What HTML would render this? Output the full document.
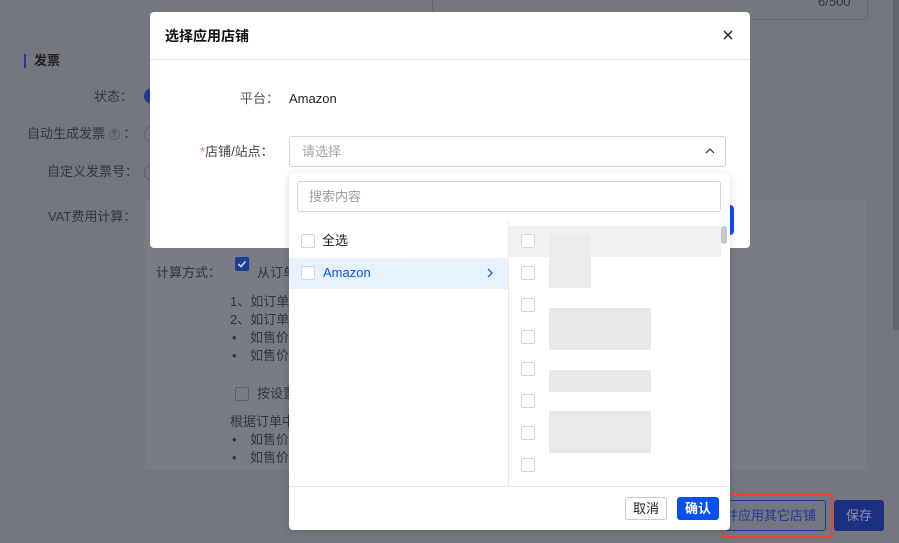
<!DOCTYPE html>
<html><head><meta charset="utf-8"><style>
*{box-sizing:border-box;margin:0;padding:0}
body{width:899px;height:543px;overflow:hidden;background:#74777f;font-family:"Liberation Sans","Noto Sans CJK SC",sans-serif;font-size:13px;position:relative;color:#222}
.a{position:absolute;white-space:nowrap;line-height:16px}
.g{color:#34363b}
.cb{position:absolute;width:14px;height:14px;border:1px solid #d3d5da;border-radius:2px;background:#fff}
.cbd{position:absolute;width:14px;height:14px;border:1px solid #5d6068;border-radius:2px}
.blk{position:absolute;background:#e6e7e9}
.bl{line-height:18px}
.bl i{font-style:normal;display:inline-block;width:20px;padding-left:2px}
</style></head><body>
<div class="a" style="left:432px;top:-10px;width:436px;height:30px;border:1px solid #65686f;border-radius:3px"></div>
<div class="a g" style="left:818px;top:-6px">6/500</div>
<div class="a" style="left:893px;top:0;width:6px;height:330px;background:#61646b"></div>
<div class="a" style="left:24px;top:54px;width:2px;height:14px;background:#1d3c9a"></div>
<div class="a" style="left:34px;top:53px;font-weight:bold;color:#222">发票</div>
<div class="a g" style="left:94px;top:89px">状态：</div>
<div class="a" style="left:144px;top:88px;width:10px;height:16px;background:#1d3c9a;border-radius:8px 0 0 8px"></div>
<div class="a" style="left:144px;top:126px;width:10px;height:17px;border:1.5px solid #5d6068;border-right:none;border-radius:9px 0 0 9px"></div>
<div class="a" style="left:144px;top:164px;width:10px;height:17px;border:1.5px solid #5d6068;border-right:none;border-radius:9px 0 0 9px"></div>
<div class="a g" style="left:27px;top:126px">自动生成发票 <span style="display:inline-block;width:11px;height:11px;border:1px solid #5d6068;border-radius:50%;font-size:8px;line-height:9px;text-align:center;vertical-align:1px">?</span> ：</div>
<div class="a g" style="left:47px;top:164px">自定义发票号：</div>
<div class="a g" style="left:48px;top:209px">VAT费用计算：</div>
<div class="a" style="left:145px;top:200px;width:722px;height:270px;background:#797c84"></div>
<div class="a g" style="left:156px;top:265px">计算方式：</div>
<div class="a" style="left:235px;top:257px;width:14px;height:14px;background:#1d3c9a;border-radius:2px"></div>
<svg class="a" style="left:235px;top:257px" width="14" height="14"><path d="M3.5 7 L6 9.5 L10.5 4.5" stroke="#c8cbd6" stroke-width="1.8" fill="none"/></svg>
<div class="a g" style="left:257px;top:265px">从订单</div>
<div class="a g bl" style="left:230px;top:293px">1、如订单<br>2、如订单<br><i>•</i>如售价<br><i>•</i>如售价</div>
<div class="cbd" style="left:235px;top:387px"></div>
<div class="a g" style="left:257px;top:386px">按设置</div>
<div class="a g bl" style="left:230px;top:413px">根据订单中<br><i>•</i>如售价<br><i>•</i>如售价</div>
<div class="a" style="left:724px;top:500px;width:102px;height:31px;border:1px solid #1d3c9a;border-radius:3px;color:#1d3c9a;line-height:29px;text-align:right;padding-right:12px">并应用其它店铺</div>
<div class="a" style="left:722px;top:493px;width:111px;height:45px;border:2px solid #e9423e;border-radius:4px"></div>
<div class="a" style="left:834px;top:500px;width:50px;height:31px;background:#1d3080;border-radius:3px;color:#8a94b8;line-height:31px;text-align:center">保存</div>

<div class="a" style="left:150px;top:12px;width:600px;height:236px;background:#fff;border-radius:4px"></div>
<div class="a" style="left:165px;top:28px;font-size:14px;font-weight:bold;color:#111">选择应用店铺</div>
<svg class="a" style="left:723px;top:30px" width="10" height="10"><path d="M1 1 L9 9 M9 1 L1 9" stroke="#222" stroke-width="1.5"/></svg>
<div class="a" style="left:150px;top:59px;width:600px;height:1px;background:#e4e5e8"></div>
<div class="a" style="left:240px;top:91px;color:#555">平台：</div>
<div class="a" style="left:289px;top:91px;color:#222">Amazon</div>
<div class="a" style="left:200px;top:144px;color:#444"><span style="color:#f56c6c">*</span>店铺/站点：</div>
<div class="a" style="left:289px;top:136px;width:437px;height:31px;border:1px solid #d3d5da;border-radius:3px"></div>
<div class="a" style="left:302px;top:144px;color:#a0a3a8">请选择</div>
<svg class="a" style="left:704px;top:146px" width="12" height="10"><path d="M2 7 L6 3 L10 7" stroke="#444" stroke-width="1.3" fill="none"/></svg>
<div class="a" style="left:726px;top:205px;width:8px;height:30px;background:#0a4ff0;border-radius:0 4px 4px 0"></div>

<div class="a" style="left:289px;top:173px;width:441px;height:357px;background:#fff;border-radius:4px;box-shadow:0 2px 8px rgba(0,0,0,.15)"></div>
<div class="a" style="left:297px;top:181px;width:424px;height:31px;border:1px solid #d3d5da;border-radius:3px"></div>
<div class="a" style="left:309px;top:189px;color:#9a9da2">搜索内容</div>
<div class="a" style="left:508px;top:221px;width:1px;height:265px;background:#e8e9eb"></div>
<div class="cb" style="left:301px;top:234px"></div>
<div class="a" style="left:322px;top:233px;color:#222">全选</div>
<div class="a" style="left:289px;top:258px;width:219px;height:31px;background:#e8f1fe"></div>
<div class="cb" style="left:301px;top:266px"></div>
<div class="a" style="left:323px;top:265px;color:#0a4ff0">Amazon</div>
<svg class="a" style="left:486px;top:267px" width="8" height="12"><path d="M2 2 L6 6 L2 10" stroke="#2458e8" stroke-width="1.3" fill="none"/></svg>
<div class="a" style="left:509px;top:226px;width:212px;height:31px;background:#f0f1f3"></div>
<div class="cb" style="left:521px;top:234px"></div>
<div class="cb" style="left:521px;top:266px"></div>
<div class="cb" style="left:521px;top:298px"></div>
<div class="cb" style="left:521px;top:330px"></div>
<div class="cb" style="left:521px;top:362px"></div>
<div class="cb" style="left:521px;top:394px"></div>
<div class="cb" style="left:521px;top:426px"></div>
<div class="cb" style="left:521px;top:458px"></div>
<div class="blk" style="left:549px;top:233px;width:42px;height:55px;background:#ebebed"></div>
<div class="blk" style="left:549px;top:308px;width:102px;height:42px"></div>
<div class="blk" style="left:549px;top:370px;width:102px;height:22px"></div>
<div class="blk" style="left:549px;top:411px;width:102px;height:42px;background:#e9e9eb"></div>
<div class="a" style="left:721px;top:226px;width:6px;height:18px;background:#c5c7cc;border-radius:3px"></div>
<div class="a" style="left:289px;top:486px;width:441px;height:1px;background:#e8e9eb"></div>
<div class="a" style="left:625px;top:497px;width:42px;height:23px;border:1px solid #c9cbd0;border-radius:3px;line-height:21px;text-align:center;color:#222">取消</div>
<div class="a" style="left:677px;top:497px;width:42px;height:23px;background:#0a4ff0;border-radius:3px;line-height:23px;text-align:center;color:#fff;font-weight:bold">确认</div>
</body></html>
